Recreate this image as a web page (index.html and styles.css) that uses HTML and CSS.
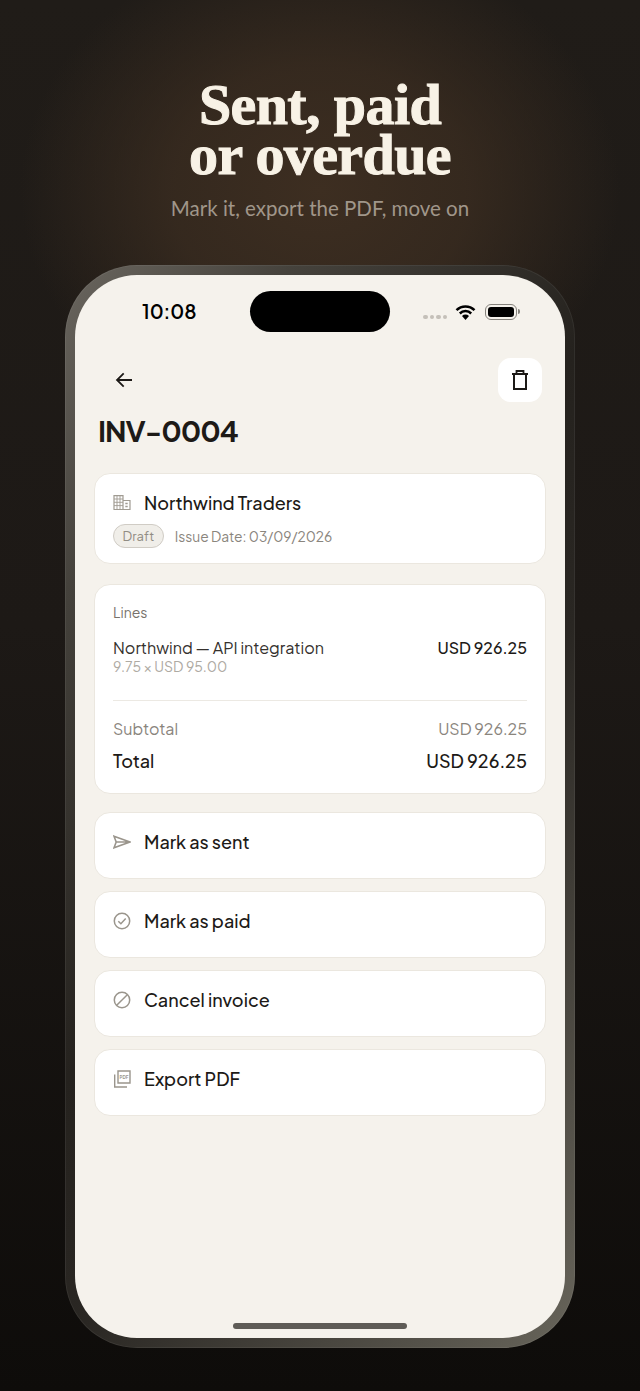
FILE: index.html
```html
<!DOCTYPE html>
<html lang="en">
  <head>
    <meta charset="UTF-8" />
    <meta name="viewport" content="width=device-width, initial-scale=1.0" />
    <title>Sent, paid or overdue</title>
    <link rel="stylesheet" href="styles.css">
  </head>
  <body>
    <header class="promo">
      <h1>Sent, paid<br />or overdue</h1>
      <p>Mark it, export the PDF, move on</p>
    </header>

    <div class="phone">
      <main class="screen">
        <div class="status-bar">
          <span class="clock">10:08</span>
          <span class="island"></span>
          <span class="status-icons">
            <span class="signal"><i></i><i></i><i></i><i></i></span>
            <svg class="wifi" width="21" height="16" viewBox="0 0 21 16">
              <path d="M1.500 6.200a12.800 12.800 0 0 1 18 0" fill="none" stroke="#000" stroke-width="2.500" />
              <path d="M4.800 9.500a8 8 0 0 1 11.400 0" fill="none" stroke="#000" stroke-width="2.500" />
              <path d="M7 12a5 5 0 0 1 7 0l-3.500 4z" fill="#000" />
            </svg>
            <span class="battery"><span class="battery-fill"></span></span>
            <span class="battery-nub"></span>
          </span>
        </div>

        <nav class="top-nav">
          <button class="icon-btn back" type="button" aria-label="Back">
            <svg width="20" height="20" viewBox="0 0 20 20" fill="none" stroke="#1d1a17" stroke-width="1.800">
              <path d="M18 10H3M9.700 3.300 3 10l6.700 6.700" />
            </svg>
          </button>
          <button class="icon-btn trash" type="button" aria-label="Delete">
            <svg width="16" height="20" viewBox="0 0 16 20" fill="none" stroke="#1d1a17" stroke-width="2">
              <path d="M0 4h16M4.500 4V1h7v3" stroke-width="1.800" />
              <path d="M2 4v15h12V4" />
            </svg>
          </button>
        </nav>

        <h2 class="invoice-no">INV-0004</h2>

        <section class="card client">
          <div class="row-title">
            <svg class="icon" width="18" height="15" viewBox="0 0 18 15" fill="none" stroke="#a09b92" stroke-width="1.200">
              <path d="M1 14.500V.6h9v13.900M10 5.500h7v9H.5" />
              <path d="M1 4h9M1 7.300h9M1 10.600h9M4 .6v13.900M7 .6v13.900" stroke-width=".9" />
              <path d="M12.300 8.500h2.400M12.300 11.500h2.400" stroke-width="1.600" />
            </svg>
            <span>Northwind Traders</span>
          </div>
          <div class="meta">
            <span class="badge">Draft</span>
            <span class="issue">Issue Date: 03/09/2026</span>
          </div>
        </section>

        <section class="card lines">
          <div class="lines-label">Lines</div>
          <div class="line-item">
            <div>
              <div class="line-name">Northwind — API integration</div>
              <div class="line-sub">9.75 × USD 95.00</div>
            </div>
            <div class="line-amount">USD 926.25</div>
          </div>
          <hr />
          <div class="sum subtotal"><span>Subtotal</span><span>USD 926.25</span></div>
          <div class="sum total"><span>Total</span><span>USD 926.25</span></div>
        </section>

        <div class="actions">
          <button class="card action" type="button">
            <svg class="icon" width="18" height="14" viewBox="0 0 18 14" fill="none" stroke="#9a958c" stroke-width="1.600">
              <path d="M1 1.200 17 7 1 12.800 3.200 7zM3.200 7H17" />
            </svg>
            <span>Mark as sent</span>
          </button>
          <button class="card action" type="button">
            <svg class="icon" width="18" height="18" viewBox="0 0 18 18" fill="none" stroke="#9a958c" stroke-width="1.500">
              <circle cx="9" cy="9" r="7.700" />
              <path d="m5.300 9.300 2.600 2.500 4.800-5.200" />
            </svg>
            <span>Mark as paid</span>
          </button>
          <button class="card action" type="button">
            <svg class="icon" width="18" height="18" viewBox="0 0 18 18" fill="none" stroke="#9a958c" stroke-width="1.500">
              <circle cx="9" cy="9" r="7.700" />
              <path d="M3.700 14.300 14.300 3.700" />
            </svg>
            <span>Cancel invoice</span>
          </button>
          <button class="card action" type="button">
            <svg class="icon" width="18" height="18" viewBox="0 0 18 18" fill="none" stroke="#9a958c" stroke-width="1.400">
              <path d="M5 1h12v12H5z" />
              <path d="M1.700 4.500V17H14" />
              <text class="pdf-mark" x="11" y="8.800">PDF</text>
            </svg>
            <span>Export PDF</span>
          </button>
        </div>

        <div class="home-bar"></div>
      </main>
    </div>
  </body>
</html>
```

FILE: styles.css
```css
html,
body {
  height: 100%;
}

body {
  margin: 0;
  overflow: hidden;
  display: flex;
  flex-direction: column;
  align-items: center;
  background:
    radial-gradient(ellipse 300px 250px at 320px 190px, #3d2e21 0%, rgba(61, 46, 33, 0.72) 50%, rgba(61, 46, 33, 0) 100%),
    linear-gradient(to bottom, #201c18 0%, #1d1916 45%, #0e0c0a 100%);
  font-family: "Plus Jakarta Sans", Inter, "Liberation Sans", sans-serif;
  color: #1d1a17;
}

button {
  font: inherit;
  color: inherit;
  cursor: pointer;
}

.promo {
  padding-top: 80px;
  height: 185px;
  text-align: center;
}

.promo h1 {
  margin: 0;
  font-family: "Liberation Serif", serif;
  font-size: 58px;
  font-weight: 700;
  line-height: 50px;
  letter-spacing: -0.6px;
  color: #f8f2e6;
  -webkit-text-stroke: 1px #f8f2e6;
}

.promo p {
  margin: 16px 0 0;
  font-family: Lato, sans-serif;
  font-size: 20.500px;
  line-height: 24px;
  color: #a0968a;
}

.phone {
  width: 490px;
  height: 1063px;
  padding: 10px;
  border-radius: 72px;
  background: linear-gradient(125deg, #6a665f 0%, #45423c 18%, #25221e 45%, #2a2723 60%, #68655b 100%);
  box-shadow: inset 0 0 0 1px rgba(255, 255, 255, 0.06);
}

.screen {
  position: relative;
  height: 100%;
  box-sizing: border-box;
  padding: 0 19px;
  border-radius: 62px;
  background: #f5f2ec;
  overflow: hidden;
}

.status-bar {
  display: grid;
  grid-template-columns: 1fr 140px 1fr;
  align-items: center;
  height: 41px;
  padding-top: 16px;
  margin: 0 -19px;
}

.clock {
  padding: 0 0 2px 67px;
  font-size: 19.500px;
  line-height: 36px;
  font-weight: 600;
  color: #000;
}

.island {
  height: 41px;
  border-radius: 21px;
  background: #000;
}

.status-icons {
  display: flex;
  align-items: center;
  padding-left: 33px;
  gap: 9px;
}

.wifi {
  margin-left: -1px;
}

.signal {
  display: flex;
  gap: 2px;
  padding-top: 11px;
}

.signal i {
  width: 4.500px;
  height: 4.500px;
  border-radius: 50%;
  background: #c4c0b9;
}

.battery {
  display: flex;
  width: 32px;
  height: 16px;
  box-sizing: border-box;
  padding: 2px;
  border: 1px solid #85827c;
  border-radius: 6px;
}

.battery-fill {
  flex: 1;
  border-radius: 3px;
  background: #000;
}

.battery-nub {
  width: 2px;
  height: 5px;
  margin-left: -8px;
  border-radius: 0 2px 2px 0;
  background: #85827c;
}

.top-nav {
  display: flex;
  justify-content: space-between;
  align-items: center;
  margin-top: 26px;
  padding: 0 4px 0 18px;
}

.icon-btn {
  display: flex;
  align-items: center;
  justify-content: center;
  padding: 0;
  border: 0;
  background: none;
}

.back {
  width: 24px;
  height: 24px;
}

.trash {
  width: 44px;
  height: 44px;
  border-radius: 13px;
  background: #fff;
}

.invoice-no {
  margin: 8px 0 0 4px;
  font-size: 29px;
  line-height: 40px;
  font-weight: 700;
  letter-spacing: -1px;
  color: #1d1a17;
}

.card {
  box-sizing: border-box;
  width: 100%;
  border: 1px solid #ebe7df;
  border-radius: 16px;
  background: #fff;
}

.client {
  height: 91px;
  margin-top: 23px;
  padding: 15px 18px;
}

.row-title {
  display: flex;
  align-items: center;
  gap: 13px;
  height: 26px;
  font-size: 18px;
  font-weight: 500;
}

.icon {
  flex: none;
}

.meta {
  display: flex;
  align-items: center;
  gap: 11px;
  margin-top: 9px;
}

.badge {
  height: 22px;
  padding: 0 8.500px;
  border: 1px solid #d0ccc5;
  border-radius: 12px;
  background: #f0eee9;
  font-size: 13px;
  line-height: 22px;
  color: #918c84;
}

.issue {
  font-size: 13.800px;
  color: #8a857d;
}

.lines {
  height: 210px;
  margin-top: 20px;
  padding: 18px 18px 0;
}

.lines-label {
  font-size: 14px;
  line-height: 18px;
  color: #77726b;
}

.line-item {
  display: flex;
  justify-content: space-between;
  margin-top: 17px;
}

.line-name {
  font-size: 16.100px;
  line-height: 20px;
  color: #35312d;
}

.line-sub {
  font-size: 14px;
  line-height: 16px;
  color: #aeaaa3;
}

.line-amount {
  font-size: 16px;
  line-height: 20px;
  font-weight: 500;
  color: #1d1a17;
}

.lines hr {
  height: 1px;
  margin: 26px 0 17px;
  border: 0;
  background: #ece9e3;
}

.sum {
  display: flex;
  justify-content: space-between;
}

.subtotal {
  font-size: 16px;
  line-height: 22px;
  color: #8a857d;
}

.total {
  margin-top: 9px;
  font-size: 18px;
  line-height: 24px;
  font-weight: 500;
}

.actions {
  display: flex;
  flex-direction: column;
  gap: 12px;
  margin-top: 18px;
}

.action {
  display: flex;
  align-items: flex-start;
  gap: 13px;
  height: 67px;
  padding: 16px 18px 0;
  font-size: 18px;
  line-height: 26px;
  font-weight: 500;
  text-align: left;
}

.action .icon {
  margin-top: 4px;
}

.action:first-child .icon {
  margin-top: 6px;
}

.pdf-mark {
  font-size: 4.500px;
  font-weight: 700;
  text-anchor: middle;
  fill: #9a958c;
  stroke: none;
}

.home-bar {
  position: absolute;
  left: 50%;
  bottom: 9px;
  width: 174px;
  height: 6px;
  margin-left: -87px;
  border-radius: 3px;
  background: #5f5c57;
}
```
